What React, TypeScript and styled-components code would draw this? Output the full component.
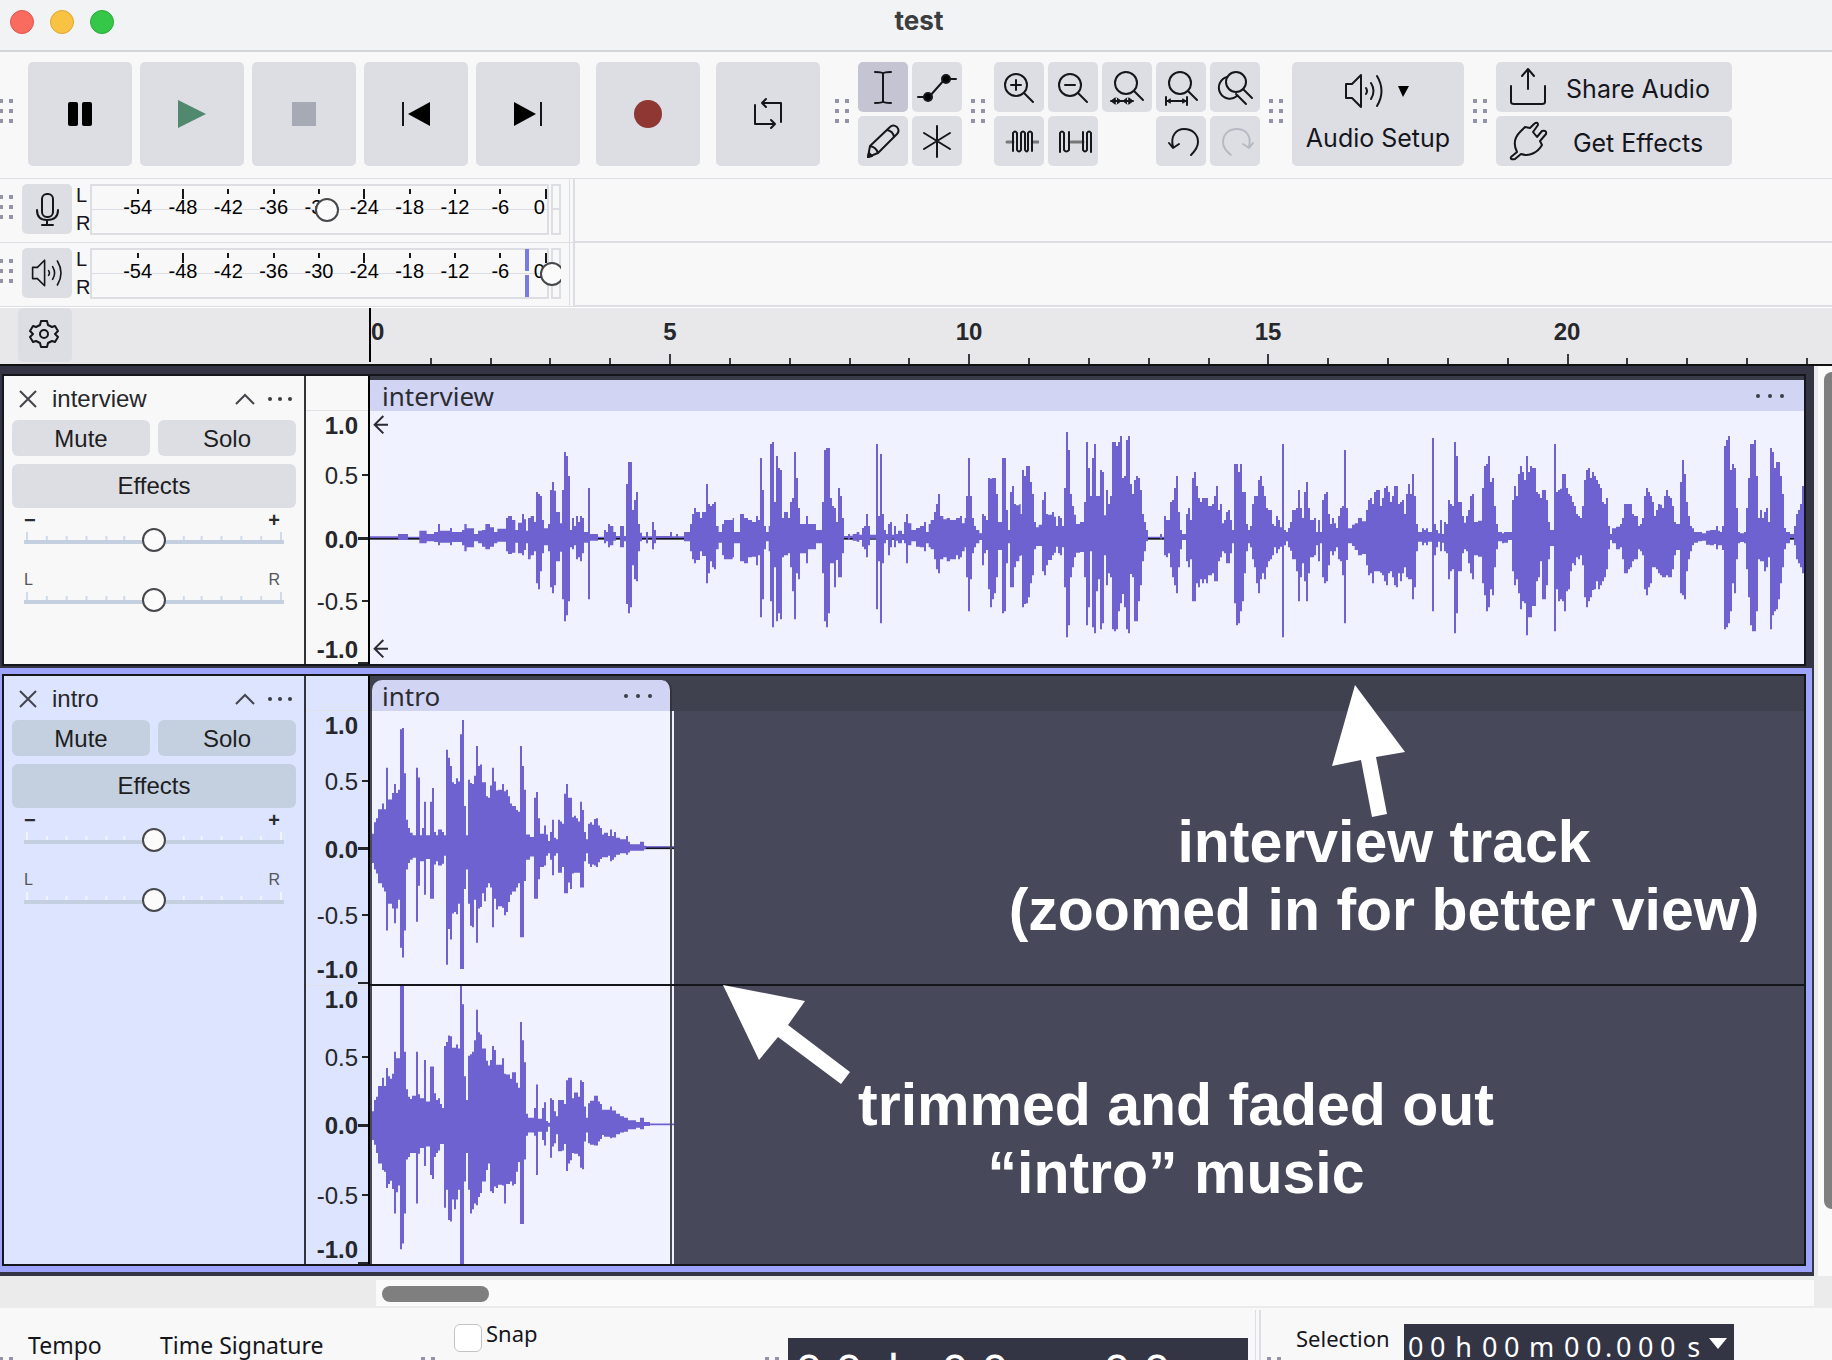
import React from "react";
import styled, { createGlobalStyle, css } from "styled-components";

const sans = `"Liberation Sans", Arial, sans-serif`;
const human = `"Noto Sans", "Open Sans", sans-serif`;
const ui = `Inter, Roboto, sans-serif`;

const color = {
  bar: "#f8f8f8",
  button: "#dddee4",
  line: "#dddee3",
  ink: "#15161b",
  dark: "#343544",
  frame: "#15161b",
  wave: "#6d62cf",
  clip: "#f0f2ff",
  clipHead: "#d1d4f3",
  focus: "#9ea3fb",
};

const GlobalStyle = createGlobalStyle`
  * { box-sizing: border-box; }
  body { margin: 0; background: ${color.bar}; overflow: hidden; }
  button { border: 0; padding: 0; font: inherit; color: inherit; }
  svg { display: block; }
`;

const Window = styled.div`
  height: 100vh;
  overflow: hidden;
  display: flex;
  flex-direction: column;
  background: ${color.bar};
  color: ${color.ink};
  font-family: ${sans};
  > * { flex-shrink: 0; }
`;

/* ---------- title bar ---------- */
const TitleBar = styled.header`
  height: 52px;
  display: grid;
  grid-template-columns: 1fr auto 1fr;
  padding: 0 4px 6px 10px;
  align-items: center;
  background: #f1f3f5;
  border-bottom: 2px solid #d3d4d5;
`;
const Lights = styled.div`
  display: flex;
  gap: 16px;
`;
const Light = styled.button<{ $fill: string; $edge: string }>`
  width: 24px;
  height: 24px;
  border-radius: 50%;
  background: ${(p) => p.$fill};
  border: 1px solid ${(p) => p.$edge};
`;
const Title = styled.h1`
  margin: 0 0 2px;
  font: 700 26px/30px ${ui};
  color: #3c3d3f;
`;

/* ---------- toolbars ---------- */
const Toolbar = styled.div`
  display: flex;
  height: 127px;
  padding-top: 10px;
  border-bottom: 1px solid ${color.line};
  overflow: hidden;
`;
const Grip = styled.span<{ $first?: boolean }>`
  flex: none;
  width: 14px;
  height: 24px;
  margin-left: ${(p) => (p.$first ? "-1px" : "0")};
  background:
    conic-gradient(#9293a6 0 0) 0 0 / 4px 4px no-repeat,
    conic-gradient(#9293a6 0 0) 10px 0 / 4px 4px no-repeat,
    conic-gradient(#9293a6 0 0) 0 10px / 4px 4px no-repeat,
    conic-gradient(#9293a6 0 0) 10px 10px / 4px 4px no-repeat,
    conic-gradient(#9293a6 0 0) 0 20px / 4px 4px no-repeat,
    conic-gradient(#9293a6 0 0) 10px 20px / 4px 4px no-repeat;
`;
const Group = styled.div<{ $wide?: boolean }>`
  display: flex;
  gap: ${(p) => (p.$wide ? 15 : 9)}px;
  margin-right: ${(p) => (p.$wide ? 15 : 9)}px;
  height: 104px;
  > ${Grip} { margin-top: 37px; }
`;
const Transport = styled.div`
  display: flex;
  gap: 8px;
`;
const face = css`
  display: flex;
  align-items: center;
  justify-content: center;
  background: ${color.button};
  border-radius: 5px;
`;
const BigButton = styled.button<{ $spaced?: boolean }>`
  ${face}
  width: 104px;
  height: 104px;
  margin-left: ${(p) => (p.$spaced ? 8 : 0)}px;
`;
const ToolGrid = styled.div<{ $cols: number }>`
  display: grid;
  grid-template-columns: repeat(${(p) => p.$cols}, 50px);
  grid-auto-rows: 50px;
  gap: 4px;
`;
const ToolButton = styled.button<{ $on?: boolean }>`
  ${face}
  width: 50px;
  height: 50px;
  ${(p) => p.$on && "background: #c4c4d2;"}
`;
const SetupButton = styled.button`
  ${face}
  flex-direction: column;
  gap: 12px;
  width: 172px;
  height: 104px;
  padding-bottom: 4px;
  font: 400 25px/30px ${ui};
`;
const SetupIcons = styled.span`
  display: flex;
  align-items: center;
  gap: 14px;
  padding-right: 4px;
`;
const Stack = styled.div`
  display: grid;
  gap: 4px;
`;
const WideButton = styled.button`
  ${face}
  display: grid;
  grid-template-columns: 40px 1fr;
  gap: 8px;
  padding: 0 12px;
  width: 236px;
  height: 50px;
  font: 400 25px/30px ${ui};
  > span { padding-top: 3px; }
`;

/* ---------- meters ---------- */
const MeterRow = styled.div`
  display: flex;
  height: 64px;
  border-bottom: 1px solid ${color.line};
`;
const MeterBar = styled.div`
  display: flex;
  width: 570px;
  padding-top: 5px;
  border-right: 1px solid ${color.line};
  > ${Grip} { margin-top: 11px; margin-right: 9px; }
`;
const MeterRest = styled.div`
  flex: 1;
  margin-left: 3px;
  border-left: 2px solid ${color.line};
  border-bottom: 1px solid ${color.line};
`;
const Channels = styled.div`
  display: flex;
  flex-direction: column;
  gap: 5px;
  width: 18px;
  padding-left: 4px;
  font-size: 20px;
  line-height: 23px;
`;
const Meter = styled.div`
  display: grid;
  grid-template-columns: 459px 10px;
  column-gap: 2px;
  width: 471px;
  height: 51px;
  overflow: hidden;
`;
const Scale = styled.div`
  grid-area: 1 / 1;
  display: grid;
  grid-template-columns: repeat(9, 1fr) 24px;
  padding: 3px 0 0 23px;
  border: 2px solid ${color.line};
  background: linear-gradient(${color.line}, ${color.line}) 0 23px / 100% 1px no-repeat;
`;
const Mark = styled.span<{ $long?: boolean; $end?: boolean }>`
  display: flex;
  flex-direction: column;
  align-items: ${(p) => (p.$end ? "flex-end" : "center")};
  font-size: 20px;
  line-height: 20px;
  color: #000;
  &::before {
    content: "";
    width: 2px;
    height: ${(p) => (p.$long ? 10 : 5)}px;
    margin-bottom: ${(p) => (p.$long ? -2 : 3)}px;
    background: ${color.ink};
  }
  > span { padding-right: ${(p) => (p.$end ? 2 : 0)}px; }
`;
const ClipLamp = styled.span`
  grid-area: 1 / 2;
  border: 2px solid ${color.line};
  background: linear-gradient(${color.line}, ${color.line}) 0 22px / 100% 2px no-repeat;
`;
const Peak = styled.span`
  grid-area: 1 / 1;
  justify-self: end;
  width: 4px;
  height: 48px;
  margin: 1px 20px 0 0;
  background: linear-gradient(#787be0 22px, transparent 22px 26px, #787be0 26px);
`;
const thumb = css`
  appearance: none;
  width: 24px;
  height: 24px;
  border: 2px solid #47484c;
  border-radius: 50%;
  background: #fbfbfb;
`;
const Range = styled.input`
  appearance: none;
  margin: 0;
  height: 24px;
  background: none;
  &::-webkit-slider-thumb { ${thumb} }
`;
const MeterRange = styled(Range)`
  grid-area: 1 / 1 / 2 / 3;
  width: 474px;
  margin-top: 14px;
`;

/* ---------- timeline ---------- */
const Timeline = styled.div`
  display: flex;
  height: 59px;
  border-top: 1px solid #fff;
  border-bottom: 2px solid #111;
  background: #e8e8ea;
`;
const TimelineHead = styled.div`
  width: 369px;
  padding-left: 18px;
`;
const GearButton = styled.button`
  ${face}
  width: 54px;
  height: 54px;
  padding: 0 2px 2px 0;
`;
const RulerArea = styled.div`
  flex: 1;
  overflow: hidden;
  display: grid;
  grid-template-rows: 46px 10px;
  background: linear-gradient(#000, #000) 0 0 / 2px 54px no-repeat;
`;
const RulerLabels = styled.div`
  display: grid;
  grid-template-columns: repeat(5, 299px);
  padding: 10px 0 0 2px;
  font: 700 24px/28px ${sans};
  color: #26272b;
`;
const RulerLabel = styled.span<{ $zero: boolean }>`
  width: 60px;
  margin-left: ${(p) => (p.$zero ? 0 : -30)}px;
  text-align: ${(p) => (p.$zero ? "left" : "center")};
`;

/* ---------- tracks ---------- */
const TracksRow = styled.main`
  display: flex;
`;
const Tracks = styled.div`
  flex: 1;
  min-width: 0;
  padding: 8px 0 4px;
  background: ${color.dark};
`;
const TrackShell = styled.section<{ $focus?: boolean }>`
  padding: ${(p) => (p.$focus ? "6px 6px 6px 2px" : "0 6px 2px 2px")};
  margin-right: 2px;
  background: ${(p) => (p.$focus ? color.focus : "transparent")};
`;
const TrackFrame = styled.div<{ $focus?: boolean }>`
  display: grid;
  grid-template-columns: 300px 64px 1fr;
  border: 2px solid ${color.frame};
  background: ${(p) => (p.$focus ? "#dde4ff" : "#f8f8f8")};
`;
const Panel = styled.div<{ $focus?: boolean }>`
  display: flex;
  flex-direction: column;
  padding: 8px 8px 0;
  font-size: 24px;
  --face: ${(p) => (p.$focus ? "#c4d0e0" : "#dddee4")};
`;
const PanelHead = styled.div`
  display: flex;
  align-items: center;
  height: 30px;
  padding: 0 3px 0 5px;
  margin-bottom: 6px;
  color: #26272b;
`;
const TrackName = styled.h2`
  flex: 1;
  margin: 0 0 0 13px;
  font: 400 24px/30px ${sans};
`;
const Bare = styled.button`
  display: flex;
  background: none;
  & + & { margin-left: 12px; }
`;
const Pair = styled.div`
  display: grid;
  grid-template-columns: 1fr 1fr;
  gap: 8px;
`;
const PanelButton = styled.button<{ $tall?: boolean }>`
  height: ${(p) => (p.$tall ? 44 : 36)}px;
  margin-top: ${(p) => (p.$tall ? 8 : 0)}px;
  padding-top: ${(p) => (p.$tall ? 0 : 2)}px;
  border-radius: 6px;
  background: var(--face);
  color: #1d1e22;
  line-height: 32px;
`;
const SliderBlock = styled.label<{ $small?: boolean }>`
  display: grid;
  grid-template-columns: 1fr 1fr;
  grid-template-rows: 16px 24px;
  padding: 0 12px;
  margin-top: ${(p) => (p.$small ? 16 : 4)}px;
  font-size: ${(p) => (p.$small ? 16 : 20)}px;
  font-weight: ${(p) => (p.$small ? 400 : 700)};
  line-height: 16px;
  height: 44px;
  color: ${(p) => (p.$small ? "#55565a" : "#2b2c30")};
  > span:nth-child(2) { text-align: right; padding-right: 4px; }
`;
const SliderBody = styled.span`
  grid-column: 1 / 3;
  display: grid;
  height: 24px;
  > * { grid-area: 1 / 1; width: 100%; }
`;
const Axis = styled.div`
  border-left: 2px solid #333438;
`;
const axisBold = { fontFamily: "Liberation Sans, Arial, sans-serif", fontSize: 24 };

const ClipArea = styled.div`
  border-left: 2px solid #000;
  min-width: 0;
  background: #3a3b48;
  padding-top: 4px;
`;
const ClipHead = styled.div`
  display: flex;
  align-items: center;
  justify-content: space-between;
  height: 31px;
  padding: 0 18px 0 12px;
  background: ${color.clipHead};
  font: 400 26px/30px ${human};
  color: #2b2c32;
`;
const WaveBody = styled.div`
  height: 253px;
  background: ${color.clip};
  > svg { width: 100%; height: 100%; }
`;
const StereoArea = styled.div`
  position: relative;
  display: grid;
  grid-template-columns: 304px 1fr;
  grid-template-rows: 35px 273px 2px 278px;
  border-left: 2px solid #000;
  background: linear-gradient(#40414f 35px, #474859 35px);
`;
const IntroHead = styled(ClipHead)`
  margin: 4px 2px 0 2px;
  padding: 0 16px 0 10px;
  border-radius: 10px 10px 0 0;
  border-right: 2px solid #333438;
`;
const IntroWave = styled.div`
  grid-column: 1;
  margin-left: 2px;
  background: ${color.clip};
  > svg { width: 100%; height: 100%; }
`;
const ChannelLine = styled.div`
  grid-column: 1 / 3;
  background: ${color.frame};
`;
const Note = styled.p<{ $left: number; $top: number; $width: number }>`
  position: absolute;
  left: ${(p) => p.$left}px;
  top: ${(p) => p.$top}px;
  width: ${(p) => p.$width}px;
  margin: 0;
  text-align: center;
  font: 700 59px/68px ${sans};
  color: #fff;
`;
const Arrow = styled.svg<{ $left: number; $top: number }>`
  position: absolute;
  left: ${(p) => p.$left}px;
  top: ${(p) => p.$top}px;
`;

/* ---------- scroll bars ---------- */
const VScroll = styled.div`
  width: 18px;
  padding: 6px 0 0 6px;
  overflow: hidden;
  border-left: 4px solid #e9e9e9;
  background: #fafafa;
`;
const VThumb = styled.div`
  width: 16px;
  height: 837px;
  border-radius: 8px;
  background: #7f7f7f;
`;
const HScroll = styled.div`
  display: flex;
  height: 32px;
  padding: 4px 18px 2px 376px;
  background: #ebebeb;
`;
const HTrack = styled.div`
  flex: 1;
  padding: 6px;
  background: #fafafa;
`;
const HThumb = styled.div`
  width: 107px;
  height: 16px;
  border-radius: 8px;
  background: #7f7f7f;
`;

/* ---------- bottom bar ---------- */
const BottomBar = styled.footer`
  display: flex;
  height: 118px;
  font: 400 22px/30px ${human};
  ${Grip} { margin-top: 49px; }
`;
const Section = styled.div<{ $width: number }>`
  flex: none;
  display: flex;
  width: ${(p) => p.$width}px;
`;
const Caption = styled.span<{ $top: number; $left: number; $width?: number; $large?: boolean }>`
  margin-left: ${(p) => p.$left}px;
  padding-top: ${(p) => p.$top}px;
  white-space: nowrap;
  ${(p) => p.$large && "font-size: 23px;"}
  ${(p) => p.$width && `width: ${p.$width}px;`}
`;
const SnapLabel = styled.label`
  display: flex;
  align-items: flex-start;
  gap: 4px;
  margin: 10px 0 0 19px;
`;
const Check = styled.input`
  appearance: none;
  width: 28px;
  height: 28px;
  margin: 6px 0 0;
  border: 1px solid #c3c3c5;
  border-radius: 6px;
  background: #fff;
`;
const Divider = styled.span`
  width: 6px;
  margin-top: 2px;
  border-left: 1px solid ${color.line};
  border-right: 2px solid ${color.line};
`;
const TimeBox = styled.div<{ $big?: boolean }>`
  display: flex;
  align-items: center;
  width: ${(p) => (p.$big ? 460 : 330)}px;
  height: ${(p) => (p.$big ? 66 : 46)}px;
  margin: ${(p) => (p.$big ? "30px 0 0 9px" : "16px 0 0 14px")};
  padding-left: 1px;
  background: ${color.dark};
  color: #fff;
  font-size: ${(p) => (p.$big ? 48 : 27)}px;
  line-height: ${(p) => (p.$big ? 66 : 46)}px;
`;
const Cell = styled.span<{ $w: number }>`
  width: ${(p) => p.$w}px;
  text-align: center;
`;

/* ---------- wave data: x, top, bottom of each column ---------- */
type Part = { at: number; data: string };

const interviewWave: Part[] = [
  {
    at: 0,
    data: `30 529 534,114 522 540,144 530 534,178 512 550,200 522 544,222 516 546,234 492 556,240 512 548,270 504 556,276 516 546,306 510 556,313 492 574,320 505 562,342 522 544,354 512 550,366 510 560,376 492 568,390 502 560,402 516 550,412 506 545,438 474 574,444 468 582,456 480 578,466 510 548,474 488 580,486 462 586,492 478 570,498 512 550,504 474 598,512 468 586,522 486 574,528 396 670,534 402 688,540 408 634,546 480 580,552 505 556,564 492 574,570 390 682,576 366 700,582 392 676,588 456 604,600 490 575,606 390 718,612 276 784,618 288 766,624 348 724,630 510 562,636 474 568,642 498 556,648 468 598,654 486 592,660 468 604,666 474 580,672 516 548,684 384 718,690 522 542,714 530 534,732 510 550,738 516 544,744 492 562,750 498 556,760 516 542,768 528 534,780 498 562,792 528 544,798 372 732,804 306 760,810 306 742,816 450 616,822 420 658,828 396 664,834 492 574,840 518 544,846 529 534,858 516 550,864 529 534,876 486 568,882 510 550,888 528 534,930 516 534,936 529 534,948 522 534,954 529 534,972 516 544,990 492 574,996 462 598,1002 444 610,1008 456 600,1020 474 574,1026 456 588,1038 372 670,1044 432 640,1050 438 604,1056 432 622,1062 426 628,1068 498 568,1076 516 548,1086 492 586,1092 480 598,1118 474 592,1122 516 550,1140 462 604,1152 474 610,1164 480 592,1176 486 590,1188 468 616,1194 480 586,1200 294 772,1206 390 718,1212 498 568,1218 516 544,1226 498 574,1230 252 724,1236 246 802,1242 426 622,1248 288 784,1254 324 760,1260 330 778,1266 474 592,1272 456 586,1284 474 580,1290 426 622,1296 414 694,1302 276 778,1308 354 640,1314 444 658,1320 492 580,1338 468 610,1344 492 568,1368 510 550,1386 426 640,1392 270 784,1398 264 802,1404 264 760,1410 414 610,1416 438 610,1422 444 682,1428 486 600,1434 384 652,1440 408 652,1446 474 580,1452 528 534,1464 522 540`,
  },
  {
    at: 1470,
    data: `0 527 534,8 522 542,20 516 545,28 524 540,36 504 560,42 498 568,48 462 592,54 498 556,60 524 536,78 252 748,84 468 604,90 282 790,96 462 610,102 510 550,108 522 540,114 492 586,120 486 562,126 524 536,132 498 562,138 522 542,144 512 550,156 522 540,162 486 550,168 462 610,174 490 556,184 510 544,198 504 560,210 498 562,222 486 574,228 516 550,236 492 562,242 480 568,252 456 598,258 432 628,264 402 640,270 468 598,280 478 592,290 474 604,300 480 598,318 474 586,324 474 598,330 468 592,336 490 574,344 474 562,348 408 652,354 294 754,360 408 658,366 474 580,372 498 562,378 510 550,388 520 540,396 462 616,402 468 580,408 480 570,414 354 688,420 356 742,426 354 718,432 354 700,438 402 652,444 486 570,456 294 760,462 294 754,468 450 610,474 510 550,480 396 682,486 378 682,492 432 622,498 436 604,508 432 588,512 462 586,516 330 742,522 348 732,528 318 730,534 318 712,540 366 670,546 402 646,552 486 568,558 502 558,566 494 558,576 420 634,582 396 646,588 462 616,594 464 600,606 456 586,612 470 578,618 498 560,624 468 580,630 474 586,636 498 562,642 384 682,648 216 832,654 270 796,660 402 652,666 438 622,672 464 592,678 492 578,690 486 576,702 426 652,708 246 796,714 324 742,720 408 574,726 294 802,732 252 820,738 408 694,744 408 658,750 330 808,756 336 790,762 466 586,768 390 676,774 432 640,780 408 652,786 246 808,792 246 814,798 258 808,804 246 754,810 228 730,816 354 702,822 348 742,828 240 808,834 228 820,840 372 642,846 402 652,852 360 784,858 348 784,864 354 724,870 390 676,876 462 604,882 486 574,888 510 544,894 530 534,930 522 536,936 530 534,942 468 586,948 480 592,954 480 580,960 426 622,966 420 652,972 384 676,978 348 700,984 456 622,990 510 568,996 522 540,1008 462 604,1014 444 622,1020 480 598,1026 354 724,1032 336 724,1038 378 670,1044 414 682,1050 426 658,1056 414 670,1062 414 658,1068 414 670,1074 438 646,1086 432 640,1092 408 664,1098 378 664,1104 450 604,1110 432 592,1116 490 574,1122 480 580,1128 456 610,1134 450 610,1140 480 580,1146 510 550,1152 312 730,1158 312 796,1164 336 790,1170 312 754,1176 396 724,1182 396 640,1188 492 574,1194 510 550,1200 498 562,1206 432 598,1212 408 622,1218 408 670,1224 360 700,1230 348 658,1236 378 640,1242 408 658,1248 444 622,1254 450 604,1260 450 598,1266 492 586,1272 498 562,1278 468 580,1284 480 568,1290 502 560,1296 252 832,1302 510 556,1308 516 544,1314 504 562,1320 486 572,1326 450 598,1338 444 634,1344 390 724,1350 444 652,1356 474 610,1362 396 664,1368 366 724,1374 444 640,1380 480 592,1392 474 586,1398 516 556,1404 480 604,1410 516 550,1416 420 652,1422 402 670,1428 396 664,1434 462 616,1440 492 574,1446 474 586,1452 490 574,1458 504 562,1464 468 598`,
  },
  {
    at: 2940,
    data: `0 444 604,6 438 646,12 270 790,18 444 600,24 505 550,36 494 558,44 490 570,54 474 586,66 484 582,78 450 616,84 420 646,90 414 640,96 432 670,102 396 634,108 390 634,120 438 638,126 414 646,132 384 664,138 378 676,144 396 640,150 426 634,156 408 652,162 378 676,168 378 682,174 432 640,180 426 664,186 420 640,192 462 622,198 402 652,204 372 658,210 402 658,216 342 718,222 408 682,228 492 574,234 516 545,246 505 556,252 510 548,258 505 556,264 516 545,276 234 754,282 492 586,288 510 562,294 520 545,300 480 574,306 522 548,312 486 574,318 492 580,324 420 658,330 432 634,336 438 628,342 246 820,348 288 760,354 426 634,366 468 580,372 488 568,378 468 574,384 450 610,390 408 640,396 402 658,402 486 586,414 482 590,426 384 670,432 318 706,438 312 754,444 288 742,450 366 688,456 354 706,462 438 622,468 492 568,474 516 544,486 520 550,492 516 548,504 516 540,516 420 634,522 378 676,528 408 658,534 342 700,540 318 748,546 336 724,552 360 730,558 288 826,564 336 772,570 318 772,576 324 738,588 396 664,594 402 652,600 414 604,606 390 718,618 420 676,624 486 598,630 510 558,642 252 814,648 396 688,654 390 724,660 386 718,666 342 724,672 342 754,678 384 694,684 402 688,690 408 634,696 426 610,702 438 616,708 462 592,714 468 598,720 474 586,726 438 616,732 360 712,738 330 742,744 324 724,750 354 712,756 336 690,762 348 688,768 360 664,774 372 688,780 384 676,786 426 664,792 432 652,798 414 628,804 498 568,810 522 540,816 505 550,828 500 568,840 492 562,846 474 598,852 432 640,864 432 628,870 432 622,876 462 604,882 468 598,894 498 568,900 492 574,906 474 586,912 408 688,918 384 706,924 396 682,930 408 670,936 426 622,942 468 622,948 450 628,954 432 640,960 434 646,966 444 652,972 408 652,978 390 646,984 408 652,990 414 652,996 438 628,1002 486 586,1008 492 570,1020 366 700,1026 300 706,1032 342 718,1038 426 634,1044 468 598,1050 498 574,1056 505 556,1062 516 548,1074 516 544,1086 520 542,1098 512 554,1110 510 556,1122 510 552,1128 498 568,1134 512 556,1140 516 556,1146 498 570,1152 258 808,1158 240 802,1164 228 790,1170 330 754,1176 312 670,1182 324 700,1188 444 598,1194 516 550,1200 520 546,1212 516 550,1218 444 628,1224 354 712,1230 252 796,1236 252 814,1242 240 814,1248 348 754,1254 474 598,1260 450 604,1266 474 604,1272 456 634,1278 444 622,1284 486 592,1290 264 808,1296 276 766,1302 324 754,1308 306 748,1314 306 718,1320 348 670,1326 402 622,1332 504 568,1338 516 550,1350 522 534,1362 498 556,1368 462 598,1374 450 610,1380 432 622,1386 378 640,1392 378 646`,
  },
];

const introLeft: Part[] = [
  {
    at: 0,
    data: `36 426 498,42 398 514,48 388 524,54 366 548,66 352 558,72 366 568,78 264 664,84 342 598,96 326 610,102 304 646,108 326 610,114 318 588,120 170 706,126 167 730,132 278 664,138 392 514,144 412 498,150 424 490,158 430 485,168 264 642,174 288 554,180 430 494,186 412 494,192 348 576,198 430 488,210 348 586,216 314 586,222 422 502,228 430 494,234 416 504,246 422 500,252 430 480,258 220 748,264 240 660,270 260 686,276 300 622,282 304 618,288 290 624,294 298 598,300 182 758,306 147 758,312 358 562,318 430 514,324 294 598,330 302 652,336 304 656,342 284 588,348 211 694,354 260 610,360 256 606,366 300 572,372 300 592,378 334 558,384 338 548,390 308 558,396 264 656,402 298 586,408 320 612,414 318 604,426 304 608,432 322 626,438 318 618,444 334 594,450 352 576,456 358 568,468 368 558,474 372 548,480 211 680,486 260 680,492 318 542,498 428 490,510 434 482,522 338 586,528 324 586,534 388 538,540 426 508,552 406 504,558 428 480,564 444 474,570 422 490,576 392 528,582 436 480,588 440 474,594 392 522,600 396 522,606 402 508,612 328 572,618 304 572,624 338 546,630 338 562,636 386 524,642 382 522,648 388 522,654 396 522,660 348 558,666 368 558,672 422 494,678 440 474,684 402 500,690 398 508,696 404 502,702 390 504,708 388 508,714 406 496,720 412 488,726 428 484,732 424 484,744 432 480,750 416 494,756 432 490,762 422 484,768 436 478,780 440 474,798 432 478,804 446 472,810 452 468,840 446 468,852 456 464,858 457 460,942 457 460`,
  },
];

const introRight: Part[] = [
  {
    at: 0,
    data: `36 1106 1176,42 1078 1188,48 1070 1208,54 1044 1234,66 1024 1250,72 1044 1254,78 1000 1294,84 1020 1284,90 1026 1276,96 1014 1296,102 960 1356,108 976 1304,114 976 1288,120 799 1444,126 799 1430,132 960 1356,138 1052 1224,144 1070 1218,150 1076 1208,156 1068 1208,168 960 1332,174 1064 1210,180 1074 1196,192 980 1240,198 1082 1192,210 996 1262,216 996 1272,222 1062 1218,228 1078 1208,234 1074 1202,240 1088 1186,246 1098 1186,252 946 1342,258 936 1298,264 920 1372,270 922 1376,276 950 1322,282 950 1346,288 942 1322,294 952 1298,300 799 1480,306 844 1480,312 1020 1278,318 1078 1208,324 970 1298,330 966 1356,336 960 1346,342 932 1332,348 857 1336,354 912 1316,360 918 1306,366 952 1278,378 982 1250,384 994 1234,390 980 1302,396 946 1306,402 956 1290,408 992 1294,414 992 1286,426 976 1288,432 1014 1332,438 1016 1284,450 1026 1278,456 1010 1288,462 1010 1284,468 1036 1254,474 1048 1230,480 887 1382,486 932 1382,492 986 1224,498 1112 1166,504 1122 1158,522 1098 1166,528 1040 1262,534 1124 1156,546 1098 1176,552 1084 1190,558 1130 1156,564 1134 1144,570 1074 1220,576 1078 1192,582 1106 1184,588 1118 1162,594 1078 1204,606 1078 1202,612 1088 1186,618 1030 1252,624 1024 1234,630 1024 1226,636 1074 1208,642 1060 1210,654 1070 1216,660 1030 1244,666 1034 1248,672 1094 1180,678 1122 1158,684 1086 1184,690 1080 1188,702 1068 1190,714 1082 1180,720 1088 1174,726 1102 1164,732 1102 1168,750 1094 1172,756 1104 1170,768 1112 1162,780 1118 1158,792 1122 1156,804 1128 1150,828 1132 1146,840 1122 1150,852 1132 1142,870 1136 1140,942 1136 1140`,
  },
];

/* Stepped outline: along the tops, then back along the bottoms. */
function outline(parts: Part[], end: number) {
  const cols = parts.flatMap(({ at, data }) =>
    data.split(",").map((c) => {
      const [x, top, bottom] = c.trim().split(" ").map(Number);
      return { x: x + at, top, bottom };
    })
  );
  let d = `M${cols[0].x} ${cols[0].top}`;
  cols.forEach((c, i) => {
    d += `V${c.top}H${cols[i + 1]?.x ?? end}`;
  });
  for (let i = cols.length - 1; i >= 0; i--) d += `V${cols[i].bottom}H${cols[i].x}`;
  return d + "Z";
}

/* ---------- icons ---------- */
const Icon = ({ size = 40, box = size, w = 2, children }: { size?: number; box?: number; w?: number; children: React.ReactNode }) => (
  <svg width={size} height={size} viewBox={`0 0 ${box} ${box}`} fill="none" stroke={color.ink} strokeWidth={w} strokeLinecap="round" strokeLinejoin="round" aria-hidden>
    {children}
  </svg>
);
const SpeakerIcon = ({ size = 40 }: { size?: number }) => (
  <Icon size={size} box={40}>
    <path d="M2 13H8L17 4V36L8 27H2Z" />
    <path d="M22 17Q24 20 22 23M27 12Q32 20 27 28M33 5Q42 20 33 35" />
  </Icon>
);
const ellipsis = (gap: number, r: number, w: number) => (
  <svg width={w} height="10" viewBox={`0 0 ${w} 10`} fill="#3c3d43" aria-hidden>
    {[-1, 0, 1].map((i) => (
      <circle key={i} cx={w / 2 + i * gap} cy="5" r={r} />
    ))}
  </svg>
);

const zoomTools: { name: string; art: React.ReactNode }[] = [
  { name: "Zoom In", art: <><circle cx="17" cy="18" r="11" /><path d="M25 26L34 35M12 18H22M17 13V23" /></> },
  { name: "Zoom Out", art: <><circle cx="17" cy="18" r="11" /><path d="M25 26L34 35M12 18H22" /></> },
  { name: "Fit selection to width", art: <><circle cx="19" cy="16" r="11" /><path d="M27 24L36 33M4 34H26" /><path d="M8 31L4 34L8 37ZM22 31L26 34L22 37Z" fill={color.ink} strokeWidth="1" /><path d="M10 31L14 34L10 37M20 31L16 34L20 37" strokeWidth="1" fill={color.ink} /></> },
  { name: "Fit project to width", art: <><circle cx="19" cy="16" r="11" /><path d="M27 24L36 33M5 34H26M5 30V38M26 30V38" /><path d="M9 32L6 34L9 36ZM22 32L25 34L22 36Z" fill={color.ink} strokeWidth="1" /></> },
  { name: "Zoom Toggle", art: <><circle cx="21" cy="15" r="10" /><path d="M28 22L37 31M12 10A11 11 0 1 0 22 29M21 27L31 37" /></> },
  { name: "Trim audio outside selection", art: <><path d="M8 21H14M34 21H39" stroke="#777" strokeWidth="3" /><path d="M14 30V12Q16 9 18 12V29Q20 32 22 29V12Q24 9 26 12V29Q28 32 29 29V12Q31 9 33 12V30" /></> },
  { name: "Silence audio selection", art: <><path d="M18 21H30" stroke="#777" strokeWidth="3" /><path d="M7 31V12Q9 9 11 12V29Q13 32 16 29V11M30 11V29Q32 32 34 29V12Q36 9 38 12V31" /></> },
];

const meterMarks = ["-54", "-48", "-42", "-36", "-30", "-24", "-18", "-12", "-6", "0"];

function MeterToolbar({ name, value, peak, icon }: { name: string; value: number; peak?: boolean; icon: React.ReactNode }) {
  return (
    <MeterRow>
      <MeterBar>
        <Grip $first />
        <ToolButton aria-label={name}>{icon}</ToolButton>
        <Channels><span>L</span><span>R</span></Channels>
        <Meter>
          <Scale>
            {meterMarks.map((m) => (
              <Mark key={m} $long={["-48", "-24", "0"].includes(m)} $end={m === "0"}><span>{m}</span></Mark>
            ))}
          </Scale>
          <ClipLamp />
          {peak && <Peak />}
          <MeterRange type="range" min={0} max={100} defaultValue={value} aria-label={`${name} level`} />
        </Meter>
      </MeterBar>
      <MeterRest />
    </MeterRow>
  );
}

function TrackSlider({ ends, small, focus }: { ends: [string, string]; small?: boolean; focus?: boolean }) {
  const inner = [23, 43, 63, 83, 101, 121, 141, 161, 179, 199, 219, 239];
  return (
    <SliderBlock $small={small}>
      <span>{ends[0]}</span>
      <span>{ends[1]}</span>
      <SliderBody>
        <svg viewBox="0 0 262 24" height="24" preserveAspectRatio="none" fill="none" strokeWidth="2" aria-hidden>
          <path d={`M3 4V12M259 4V12${inner.map((x) => `M${x} 8V12`).join("")}`} stroke={focus ? "#f2f4fa" : "#cfdaea"} />
          <path d="M0 14H262" stroke="#c4d0e0" strokeWidth="4" />
        </svg>
        <Range type="range" min={0} max={100} defaultValue={50} />
      </SliderBody>
    </SliderBlock>
  );
}

function TrackPanel({ name, focus }: { name: string; focus?: boolean }) {
  return (
    <Panel $focus={focus}>
      <PanelHead>
        <Bare aria-label="Close track">
          <svg width="22" height="22" viewBox="0 0 22 22" fill="none" stroke="#44454b" strokeWidth="2" aria-hidden><path d="M3 3L19 19M19 3L3 19" /></svg>
        </Bare>
        <TrackName>{name}</TrackName>
        <Bare aria-label="Collapse track">
          <svg width="20" height="14" viewBox="0 0 20 14" fill="none" stroke="#44454b" strokeWidth="2" aria-hidden><path d="M1 12L10 3L19 12" /></svg>
        </Bare>
        <Bare aria-label="Track menu">{ellipsis(10, 2, 26)}</Bare>
      </PanelHead>
      <Pair>
        <PanelButton>Mute</PanelButton>
        <PanelButton>Solo</PanelButton>
      </Pair>
      <PanelButton $tall>Effects</PanelButton>
      <TrackSlider ends={["−", "+"]} focus={focus} />
      <TrackSlider ends={["L", "R"]} small focus={focus} />
    </Panel>
  );
}

/* Amplitude axis; each mark is [label, text centre, tick position]. */
type AxisMark = [string, number, number | null];
function AmplitudeAxis({ height, lines, marks }: { height: number; lines: number[]; marks: AxisMark[] }) {
  return (
    <Axis>
      <svg width="62" height={height} viewBox={`0 0 62 ${height}`} fill="#26272b">
        {lines.map((y) => <rect key={y} x="0" y={y} width="62" height="1" fill="#e2e2e6" />)}
        {marks.map(([label, y, tick], i) => {
          const major = !label.endsWith("5");
          return (
            <g key={i}>
              <text x="52" y={y + 9} textAnchor="end" {...axisBold} fontWeight={major ? 700 : 400}>{label}</text>
              {tick !== null && <rect x={major ? 52 : 56} y={tick - 1} width={major ? 10 : 6} height={label === "0.0" ? 3 : 2} />}
            </g>
          );
        })}
      </svg>
    </Axis>
  );
}

const EdgeArrow = ({ y }: { y: number }) => (
  <path d={`M84 ${y}H44M70 ${y - 26}L44 ${y}L70 ${y + 26}`} fill="none" stroke="#2a2b30" strokeWidth="6" />
);

const timeSmall: [string, number][] = [["0", 22], ["0", 22], ["h", 30], ["0", 22], ["0", 22], ["m", 38], ["0", 22], ["0", 22], [".", 8], ["0", 22], ["0", 22], ["0", 22], ["s", 30]];
const timeBig: [string, number][] = [["0", 40], ["0", 40], ["h", 66], ["0", 40], ["0", 40], ["m", 82], ["0", 40], ["0", 40], ["s", 60]];

export default function App() {
  return (
    <>
      <GlobalStyle />
      <Window>
        <TitleBar>
          <Lights>
            <Light $fill="#f96a5f" $edge="#e2554b" aria-label="Close" />
            <Light $fill="#f8c243" $edge="#dfa52f" aria-label="Minimise" />
            <Light $fill="#34c748" $edge="#27a938" aria-label="Zoom" />
          </Lights>
          <Title>test</Title>
        </TitleBar>

        <Toolbar>
          <Group $wide>
            <Grip $first />
            <Transport>
              <BigButton aria-label="Pause"><Icon><g fill="#000" stroke="none"><rect x="8" y="8" width="10" height="24" rx="2" /><rect x="22" y="8" width="10" height="24" rx="2" /></g></Icon></BigButton>
              <BigButton aria-label="Play"><Icon><path d="M6 6L34 20L6 34Z" fill="#50896d" stroke="none" /></Icon></BigButton>
              <BigButton aria-label="Stop"><Icon><rect x="8" y="8" width="24" height="24" fill="#a6aab4" stroke="none" /></Icon></BigButton>
              <BigButton aria-label="Skip to Start"><Icon><path d="M7 8V32" strokeLinecap="butt" /><path d="M34 8V32L12 20Z" fill="#000" stroke="none" /></Icon></BigButton>
              <BigButton aria-label="Skip to End"><Icon><path d="M33 8V32" strokeLinecap="butt" /><path d="M6 8V32L28 20Z" fill="#000" stroke="none" /></Icon></BigButton>
              <BigButton $spaced aria-label="Record"><Icon><circle cx="20" cy="20" r="14" fill="#8f3733" stroke="none" /></Icon></BigButton>
              <BigButton $spaced aria-label="Loop">
                <Icon><path d="M7 11V30H27M23 26L27 30L23 34M33 28V9H14M18 5L14 9L18 13" /></Icon>
              </BigButton>
            </Transport>
          </Group>
          <Group>
            <Grip />
            <ToolGrid $cols={2}>
              <ToolButton $on aria-label="Selection Tool"><Icon><path d="M12 5Q20 5 20 7Q20 5 28 5M20 6V35M12 36Q20 36 20 34Q20 36 28 36" /></Icon></ToolButton>
              <ToolButton aria-label="Envelope Tool"><Icon><path d="M1 30H12L28 12H39" /><circle cx="11" cy="30" r="4" fill="#000" /><circle cx="29" cy="12" r="4" fill="#000" /></Icon></ToolButton>
              <ToolButton aria-label="Draw Tool"><Icon><path d="M5 36L7 25L27 6Q30 3 34 6Q37 10 34 13L15 32ZM7 25Q13 26 15 32M24 9Q30 10 31 16" /><path d="M5 36L6 32L9 35Z" fill={color.ink} /></Icon></ToolButton>
              <ToolButton aria-label="Multi-Tool"><Icon><path d="M20 5V36M7 12L33 28M33 12L7 28" /></Icon></ToolButton>
            </ToolGrid>
          </Group>
          <Group>
            <Grip />
            <ToolGrid $cols={5}>
              {zoomTools.map((t) => (
                <ToolButton key={t.name} aria-label={t.name}><Icon>{t.art}</Icon></ToolButton>
              ))}
              <span />
              <ToolButton aria-label="Undo"><Icon><path d="M12 26C9 14 16 8 23 8C32 8 37 14 37 21C37 27 33 31 30 34M8 22L12 27L18 23" /></Icon></ToolButton>
              <ToolButton aria-label="Redo"><Icon><g stroke="#b8bac3"><path d="M34 26C37 14 30 8 22 8C13 8 8 14 8 21C8 27 12 31 16 34M38 22L34 27L28 23" /></g></Icon></ToolButton>
            </ToolGrid>
          </Group>
          <Group>
            <Grip />
            <SetupButton>
              <SetupIcons>
                <SpeakerIcon />
                <svg width="11" height="12" viewBox="0 0 11 12" aria-hidden><path d="M0 1H11L5 12Z" /></svg>
              </SetupIcons>
              Audio Setup
            </SetupButton>
          </Group>
          <Group>
            <Grip />
            <Stack>
              <WideButton>
                <Icon><path d="M3 19V35Q3 37 6 37H34Q37 37 37 35V19M20 22V3M14 9L20 2L26 9" /></Icon>
                <span>Share Audio</span>
              </WideButton>
              <WideButton>
                <Icon><path d="M3 36L9 31C5 23 7 16 12 11L17 6L22 7L26 3Q30 0 30 4L25 11L29 16L34 10Q39 9 38 13L32 20L34 24C30 31 22 36 13 33L7 38Q2 39 3 36Z" /></Icon>
                <span>Get Effects</span>
              </WideButton>
            </Stack>
          </Group>
        </Toolbar>

        <MeterToolbar
          name="Record Meter"
          value={50}
          icon={<Icon><rect x="15" y="5" width="11" height="23" rx="5" /><path d="M10 21C10 29 15 31 20 31C26 31 31 29 31 21M20 31V36M15 36H26" /></Icon>}
        />
        <MeterToolbar name="Playback Meter" value={100} peak icon={<SpeakerIcon size={32} />} />

        <Timeline>
          <TimelineHead>
            <GearButton aria-label="Timeline options">
              <Icon size={32}>
                <path d="M13 3H19L20 7L24 9L27 8L30 13L27 16L30 19L27 24L24 23L20 25L19 29H13L12 25L8 23L5 24L2 19L5 16L2 13L5 8L8 9L12 7Z" />
                <circle cx="16" cy="16" r="4" />
              </Icon>
            </GearButton>
          </TimelineHead>
          <RulerArea>
            <RulerLabels>
              {[0, 5, 10, 15, 20].map((n) => <RulerLabel key={n} $zero={n === 0}>{n}</RulerLabel>)}
            </RulerLabels>
            <svg width="1464" height="10" viewBox="0 0 1464 10" aria-hidden>
              {Array.from({ length: 24 }, (_, i) => i + 1).map((n) => (
                <rect key={n} x={Math.round(n * 59.83) + 1} y={n % 5 ? 4 : 0} width="2" height="10" fill="#3a3b40" />
              ))}
            </svg>
          </RulerArea>
        </Timeline>

        <TracksRow>
          <Tracks>
            <TrackShell>
              <TrackFrame>
                <TrackPanel name="interview" />
                <AmplitudeAxis
                  height={288}
                  lines={[34]}
                  marks={[["1.0", 49, null], ["0.5", 99, 99], ["0.0", 163, 162], ["-0.5", 225, 225], ["-1.0", 273, 287]]}
                />
                <ClipArea>
                  <ClipHead><span>interview</span>{ellipsis(12, 2, 32)}</ClipHead>
                  <WaveBody>
                    <svg viewBox="30 153 4302 759" preserveAspectRatio="none" role="img" aria-label="interview waveform">
                      <rect x="30" y="533" width="4302" height="6" fill={color.ink} />
                      <path d={outline(interviewWave, 4332)} fill={color.wave} />
                      <EdgeArrow y={194} />
                      <EdgeArrow y={866} />
                    </svg>
                  </WaveBody>
                </ClipArea>
              </TrackFrame>
            </TrackShell>

            <TrackShell $focus>
              <TrackFrame $focus>
                <TrackPanel name="intro" focus />
                <AmplitudeAxis
                  height={588}
                  lines={[34, 309]}
                  marks={[
                    ["1.0", 49, null], ["0.5", 105, 105], ["0.0", 173, 172], ["-0.5", 239, 239], ["-1.0", 293, 307],
                    ["1.0", 323, null], ["0.5", 381, 381], ["0.0", 449, 449], ["-0.5", 519, 519], ["-1.0", 573, 587],
                  ]}
                />
                <StereoArea>
                  <IntroHead><span>intro</span>{ellipsis(12, 2, 32)}</IntroHead>
                  <IntroWave>
                    <svg viewBox="36 125 906 670" preserveAspectRatio="none" role="img" aria-label="intro waveform, left channel">
                      <rect x="36" y="458" width="906" height="6" fill={color.ink} />
                      <path d={outline(introLeft, 942)} fill={color.wave} />
                      <rect x="930" y="125" width="6" height="670" fill="#4a4b50" />
                    </svg>
                  </IntroWave>
                  <ChannelLine />
                  <IntroWave>
                    <svg viewBox="36 799 906 681" preserveAspectRatio="none" role="img" aria-label="intro waveform, right channel">
                      <path d={outline(introRight, 942)} fill={color.wave} />
                      <rect x="930" y="799" width="6" height="681" fill="#4a4b50" />
                    </svg>
                  </IntroWave>
                  <Arrow $left={960} $top={9} width="76" height="132" viewBox="0 0 76 132" fill="#fff" aria-hidden>
                    <path d="M25 0L75 67L46 72L57 129L42 132L31 75L2 81Z" />
                  </Arrow>
                  <Note $left={622} $top={132} $width={784}>interview track<br />(zoomed in for better view)</Note>
                  <Arrow $left={353} $top={309} width="128" height="100" viewBox="0 0 128 100" fill="#fff" aria-hidden>
                    <path d="M0 0L82 16L65 40L127 87L118 99L55 52L36 75Z" />
                  </Arrow>
                  <Note $left={470} $top={395} $width={672}>trimmed and faded out<br />“intro” music</Note>
                </StereoArea>
              </TrackFrame>
            </TrackShell>
          </Tracks>
          <VScroll><VThumb /></VScroll>
        </TracksRow>

        <HScroll><HTrack><HThumb /></HTrack></HScroll>

        <BottomBar>
          <Section $width={421}>
            <Grip $first />
            <Caption $large $top={22} $left={15} $width={132}>Tempo</Caption>
            <Caption $large $top={22} $left={0}>Time Signature</Caption>
          </Section>
          <Section $width={344}>
            <Grip />
            <SnapLabel><Check type="checkbox" />Snap</SnapLabel>
          </Section>
          <Section $width={490}>
            <Grip />
            <TimeBox $big>{timeBig.map(([c, w], i) => <Cell key={i} $w={w}>{c}</Cell>)}</TimeBox>
          </Section>
          <Divider />
          <Section $width={560}>
            <Grip style={{ marginLeft: 6 }} />
            <Caption $top={15} $left={15}>Selection</Caption>
            <TimeBox>
              {timeSmall.map(([c, w], i) => <Cell key={i} $w={w}>{c}</Cell>)}
              <Bare aria-label="Time format">
                <svg width="18" height="26" viewBox="0 0 18 26" fill="#fff" aria-hidden><path d="M0 4H18L9 15Z" /></svg>
              </Bare>
            </TimeBox>
          </Section>
        </BottomBar>
      </Window>
    </>
  );
}
